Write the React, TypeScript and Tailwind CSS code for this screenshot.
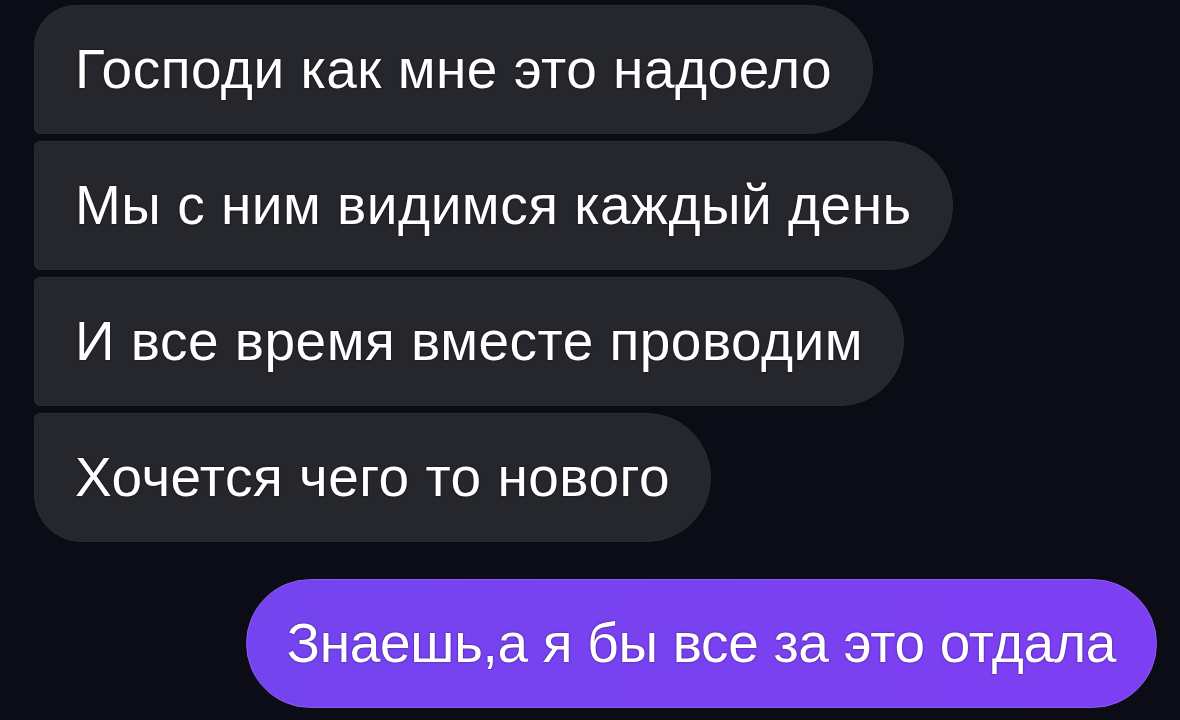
import React from "react";

const font = { fontFamily: '"Liberation Sans", Arial, sans-serif' };

function Incoming({ text, shape }: { text: string; shape: string }) {
  return (
    <div
      className={`h-[129px] flex items-center pl-[40px] pr-[40px] bg-[#26272d] border border-[#2c2d34] text-white text-[55px] leading-none tracking-[0.5px] [text-shadow:0_0_2px_rgba(0,0,0,0.9)] ${shape}`}
    >
      <span className="whitespace-nowrap">{text}</span>
    </div>
  );
}

export default function App() {
  return (
    <div
      className="w-[1180px] h-[720px] bg-[#0b0c15] overflow-hidden flex flex-col"
      style={font}
    >
      <div className="flex flex-col items-start gap-[7px] pt-[5px] pl-[34px]">
        <Incoming
          text="Господи как мне это надоело"
          shape="rounded-tl-[42px] rounded-bl-[6px] rounded-r-[65px]"
        />
        <Incoming
          text="Мы с ним видимся каждый день"
          shape="rounded-l-[6px] rounded-r-[65px]"
        />
        <Incoming
          text="И все время вместе проводим"
          shape="rounded-l-[6px] rounded-r-[65px]"
        />
        <Incoming
          text="Хочется чего то нового"
          shape="rounded-tl-[6px] rounded-bl-[48px] rounded-r-[65px]"
        />
      </div>
      <div className="flex justify-end pr-[23px] mt-[37px]">
        <div className="h-[129px] flex items-center pl-[40px] pr-[40px] rounded-full bg-gradient-to-r from-[#7444ef] to-[#7d3ff2] border border-[#8d5cf5] text-white text-[55px] leading-none tracking-[-0.3px] [text-shadow:0_0_2px_rgba(40,10,90,0.9)]">
          <span className="whitespace-nowrap">Знаешь,а я бы все за это отдала</span>
        </div>
      </div>
    </div>
  );
}
